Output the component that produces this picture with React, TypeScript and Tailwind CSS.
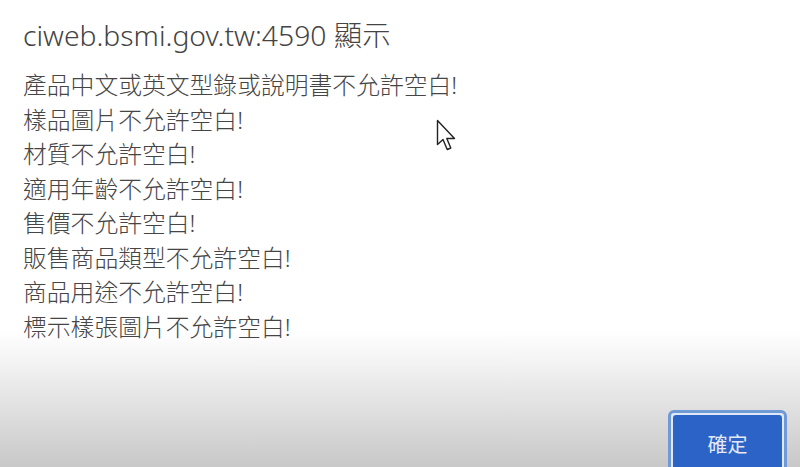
import React from "react";

const lines = [
  "產品中文或英文型錄或說明書不允許空白!",
  "樣品圖片不允許空白!",
  "材質不允許空白!",
  "適用年齡不允許空白!",
  "售價不允許空白!",
  "販售商品類型不允許空白!",
  "商品用途不允許空白!",
  "標示樣張圖片不允許空白!",
];

export default function App() {
  return (
    <div
      className="relative w-[800px] h-[467px] overflow-hidden bg-[linear-gradient(to_bottom,#ffffff_0px,#ffffff_330px,#f2f2f2_365px,#c8c8c8_467px)]"
      style={{ fontFamily: '"Noto Sans", "Noto Sans CJK TC", sans-serif' }}
    >
      <div className="flex flex-col pl-[23px] pt-[16px]">
        <div className="text-[28.3px] font-light leading-[38px] text-[#444444]">ciweb.bsmi.gov.tw:4590 顯示</div>
        <div className="mt-[14px] flex flex-col text-[23.8px] font-light leading-[34.5px] text-[#454545]">
          {lines.map((l) => (
            <div key={l}>{l}</div>
          ))}
        </div>
      </div>

      <svg
        className="absolute left-[436px] top-[119px]"
        width="22"
        height="36"
        viewBox="0 0 22 36"
      >
        <path
          d="M1.5 1.5 L1.5 25.5 L7 20.5 L11.2 30.5 L14.8 29 L10.8 19.5 L18.5 19.5 Z"
          fill="#ffffff"
          stroke="#222"
          strokeWidth="1.4"
          strokeLinejoin="round"
        />
      </svg>

      <div className="absolute left-[668px] top-[410px] w-[119px] h-[70px] rounded-[6px] border-[3px] border-[#6f9ad6] bg-[#dfe8f4] p-[2px]">
        <div className="flex h-full w-full items-start justify-center rounded-[3px] bg-[#2b63c6] pt-[16px] text-[20px] leading-[28px] text-[#e4eaf5]">
          確定
        </div>
      </div>
    </div>
  );
}
